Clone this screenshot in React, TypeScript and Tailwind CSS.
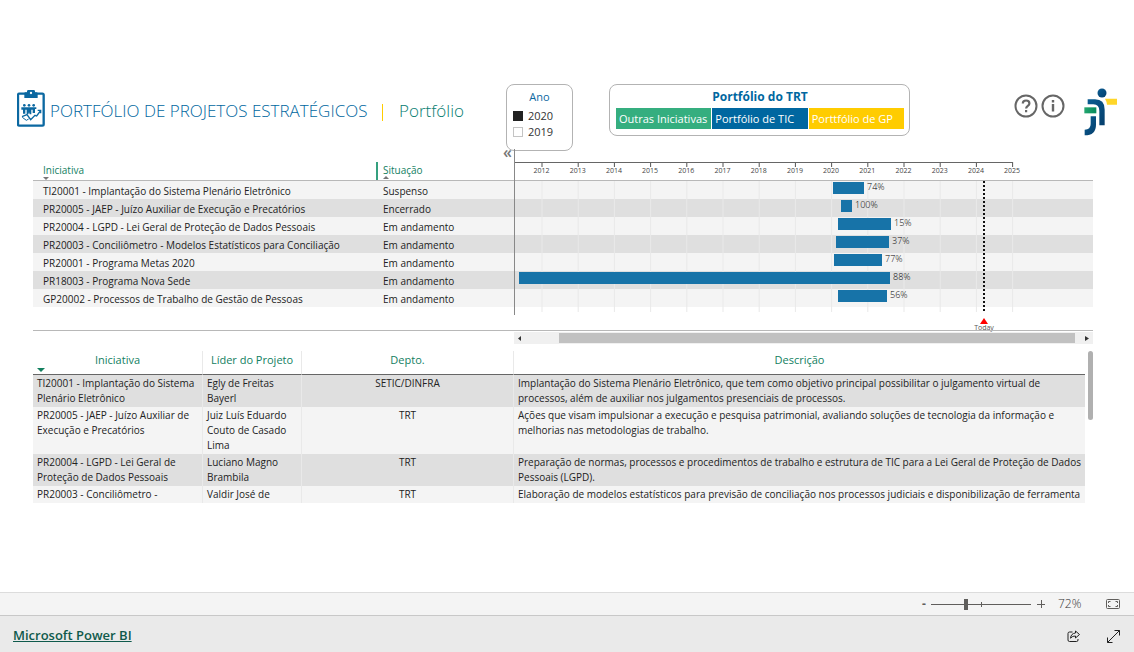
import { useState } from "react";

type Project = { name: string; status: string; start: number; end: number; pct: string };

const projects: Project[] = [
  { name: "TI20001 - Implantação do Sistema Plenário Eletrônico", status: "Suspenso", start: 319, end: 350, pct: "74%" },
  { name: "PR20005 - JAEP - Juízo Auxiliar de Execução e Precatórios", status: "Encerrado", start: 327, end: 338, pct: "100%" },
  { name: "PR20004 - LGPD - Lei Geral de Proteção de Dados Pessoais", status: "Em andamento", start: 324, end: 377, pct: "15%" },
  { name: "PR20003 - Conciliômetro - Modelos Estatísticos para Conciliação", status: "Em andamento", start: 322, end: 375, pct: "37%" },
  { name: "PR20001 - Programa Metas 2020", status: "Em andamento", start: 320, end: 368, pct: "77%" },
  { name: "PR18003 - Programa Nova Sede", status: "Em andamento", start: 5, end: 376, pct: "88%" },
  { name: "GP20002 - Processos de Trabalho de Gestão de Pessoas", status: "Em andamento", start: 324, end: 373, pct: "56%" },
];

const details = [
  ["TI20001 - Implantação do Sistema Plenário Eletrônico", "Egly de Freitas Bayerl", "SETIC/DINFRA", "Implantação do Sistema Plenário Eletrônico, que tem como objetivo principal possibilitar o julgamento virtual de processos, além de auxiliar nos julgamentos presenciais de processos."],
  ["PR20005 - JAEP - Juízo Auxiliar de Execução e Precatórios", "Juiz Luís Eduardo Couto de Casado Lima", "TRT", "Ações que visam impulsionar a execução e pesquisa patrimonial, avaliando soluções de tecnologia da informação e melhorias nas metodologias de trabalho."],
  ["PR20004 - LGPD - Lei Geral de Proteção de Dados Pessoais", "Luciano Magno Brambila", "TRT", "Preparação de normas, processos e procedimentos de trabalho e estrutura de TIC para a Lei Geral de Proteção de Dados Pessoais (LGPD)."],
  ["PR20003 - Conciliômetro -", "Valdir José de", "TRT", "Elaboração de modelos estatísticos para previsão de conciliação nos processos judiciais e disponibilização de ferramenta"],
];

const years = [2012, 2013, 2014, 2015, 2016, 2017, 2018, 2019, 2020, 2021, 2022, 2023, 2024, 2025];
const SPAN = 579;
const pos = (v: number) => `${(v / SPAN) * 100}%`;
const yearX = (y: number) => 27.5 + (y - 2012) * 36.2;

function ClipboardIcon() {
  return (
    <svg className="h-[37px] w-7 shrink-0" viewBox="51 45 84 111" aria-hidden="true">
      <rect x="54" y="56" width="77" height="96" rx="4" fill="#fff" stroke="#0b68a1" strokeWidth="7" />
      <path d="M73 69V55q0-3 3-3h5v-3q0-4 4-4h16q4 0 4 4v3h4q4 0 4 4v13z" fill="#0b68a1" />
      <circle cx="93" cy="54" r="3.5" fill="#fff" />
      <g fill="#0b68a1">
        <circle cx="73" cy="91" r="4" />
        <circle cx="87" cy="91" r="4" />
        <circle cx="101" cy="91" r="4" />
        <path d="M64 97h45v5h-4v12h-7v-10h-4v14h-5l-2-6-2 6h-5v-14h-4v12h-7v-12h-5z" />
      </g>
      <path d="M66 125l15-6 11 15 13-13 5 2 11-15M113 106h9v9" fill="none" stroke="#0b68a1" strokeWidth="4" />
      <path d="M67 127l12 9 7-4" fill="none" stroke="#0b68a1" strokeWidth="3" />
    </svg>
  );
}

function TrtLogo() {
  return (
    <svg className="h-12 w-[33px]" viewBox="252 38 99 144" aria-label="TRT" role="img">
      <defs>
        <linearGradient id="navy" x1="0" y1="0" x2="1" y2="1">
          <stop offset="0" stopColor="#0a5d93" />
          <stop offset="1" stopColor="#063f6c" />
        </linearGradient>
        <linearGradient id="green" x1="0" y1="0" x2="1" y2="0">
          <stop offset="0" stopColor="#23a66f" />
          <stop offset="1" stopColor="#078a5b" />
        </linearGradient>
      </defs>
      <circle cx="306" cy="53" r="13.5" fill="url(#navy)" />
      <path d="M315 70h36v18h-30q-1-10-6-18z" fill="#ffd629" />
      <path d="M263 72h22q29 0 29 31v47h-16v-43q0-20-18-20h-17z" fill="url(#navy)" />
      <path d="M253 96h36v18h-36z" fill="url(#green)" />
      <path d="M272 123h16v25q0 32-34 32v-17q18 0 18-17z" fill="url(#navy)" />
    </svg>
  );
}

function GanttChart() {
  return (
    <svg className="block h-[179px] w-full overflow-visible font-['Open_Sans',sans-serif]" role="img" aria-label="Cronograma">
      {projects.map((p, i) => (
        <rect key={p.name} x="0" y={30 + i * 18} width="100%" height="18" fill={i % 2 ? "#dfdfdf" : "#f4f4f4"} />
      ))}
      <rect x="0" y="29" width="100%" height="1" fill="#b8b8b8" />
      {years.map((y) => (
        <g key={y}>
          <rect x={pos(yearX(y))} y="30" width="1" height="131" fill="#e9e9e9" />
          <rect x={pos(yearX(y))} y="11" width="1" height="5" fill="#555" />
          <text x={pos(yearX(y))} y="22" textAnchor="middle" fontSize="7" fill="#444">{y}</text>
        </g>
      ))}
      <rect x="0" y="11" width={pos(498)} height="1" fill="#666" />
      <rect x="0" y="-2" width="1" height="166" fill="#888" />
      {projects.map((p, i) => (
        <g key={p.name}>
          <rect x={pos(p.start)} y={31 + i * 18} width={pos(p.end - p.start)} height="12" fill="#1773a8" />
          <text x={pos(p.end + 3)} y={39 + i * 18} fontSize="9" fontWeight="300" fill="#000">{p.pct}</text>
        </g>
      ))}
      <line x1={pos(470)} x2={pos(470)} y1="30" y2="161" stroke="#111" strokeWidth="2" strokeDasharray="2 2" />
      <svg x={pos(470)} y="167" width="8" height="6" overflow="visible">
        <path d="M-4 6L0 0l4 6z" fill="#f00" />
      </svg>
      <text x={pos(470)} y="179" textAnchor="middle" fontSize="7" fill="#555">Today</text>
    </svg>
  );
}

function YearOption({ year, initial }: { year: string; initial: boolean }) {
  const [on, setOn] = useState(initial);
  return (
    <label className="flex h-4 items-center gap-[5px] text-[11px] text-[#333]">
      <input
        type="checkbox"
        checked={on}
        onChange={() => setOn(!on)}
        className="size-[10px] appearance-none border border-[#c4c4c4] bg-white checked:border-[#222] checked:bg-[#222]"
      />
      {year}
    </label>
  );
}

export default function App() {
  const [zoom, setZoom] = useState(72);
  return (
    <div className="flex min-h-screen flex-col bg-white font-['Open_Sans','Noto_Sans',sans-serif] text-[#222]">
      <main className="grow pt-[84px]">
        <header className="flex h-[67px] items-start pr-[17px] pl-[17px]">
          <div className="flex w-[489px] shrink-0 items-start pt-[6px]">
            <ClipboardIcon />
            <h1 className="mt-[9px] ml-[5px] text-[17px] leading-6 font-light whitespace-nowrap text-[#0067a0]">PORTFÓLIO DE PROJETOS ESTRATÉGICOS</h1>
            <span className="mt-[14px] ml-auto h-[17px] w-px bg-[#fc0]" />
            <h2 className="mt-[9px] mr-[42px] ml-4 text-[17px] leading-6 font-light text-[#067d70]">Portfólio</h2>
          </div>
          <fieldset className="h-[67px] w-[67px] shrink-0 rounded-lg border border-[#b3b3b3] px-[6px] pt-1">
            <div className="text-center text-[11px] leading-4 text-[#0b68a1]">Ano</div>
            <div className="mt-[3px]">
              <YearOption year="2020" initial={true} />
              <YearOption year="2019" initial={false} />
            </div>
          </fieldset>
          <nav className="ml-9 h-[52px] w-[301px] shrink-0 rounded-lg border border-[#b3b3b3] pt-1 pr-[5px] pl-[6px]">
            <div className="text-center text-xs leading-4 font-bold text-[#0067a0]">Portfólio do TRT</div>
            <div className="mt-[3px] grid grid-cols-3 gap-px text-left text-[11px] leading-[21px] text-white">
              <button className="bg-[#35ae7f] pl-[3px] text-left whitespace-nowrap">Outras Iniciativas</button>
              <button className="bg-[#0067a0] pl-[3px] text-left whitespace-nowrap">Portfólio de TIC</button>
              <button className="bg-[#fc0] pl-[3px] text-left whitespace-nowrap">Porttfólio de GP</button>
            </div>
          </nav>
          <div className="ml-auto flex gap-[3px] pt-[10px]">
            <button aria-label="Ajuda">
              <svg className="size-6" viewBox="0 0 24 24" fill="none" stroke="#666" strokeWidth="2">
                <circle cx="12" cy="12" r="10.5" />
                <path d="M8.8 9.6q0-3.1 3.3-3.1t3.3 2.9c0 2.4-3.3 2.5-3.3 5.1M12.1 16v2.2" strokeWidth="2.2" />
              </svg>
            </button>
            <button aria-label="Informações">
              <svg className="size-6" viewBox="0 0 24 24" fill="none" stroke="#666" strokeWidth="2">
                <circle cx="12" cy="12" r="10.5" />
                <path d="M12 6v2.4M12 10v7.6" strokeWidth="2.4" />
              </svg>
            </button>
          </div>
          <div className="ml-[19px] pt-1">
            <TrtLogo />
          </div>
        </header>

        <section className="relative mr-[41px] ml-[33px] grid grid-cols-[481px_1fr]">
          <button aria-label="Recolher" className="absolute top-[-7px] left-[470px] text-base leading-4 font-semibold text-[#777]">«</button>
          <table className="w-full table-fixed border-separate border-spacing-0 self-start text-[10px]">
            <thead>
              <tr className="h-[30px] text-left text-[#12805f]">
                <th className="w-[345px] border-b border-[#b8b8b8] p-0 pt-[11px] pl-[10px] align-top font-normal">
                  <div className="relative h-[18px] border-r-2 border-[#35a07f] leading-[16px]">
                    Iniciativa
                    <span className="absolute bottom-0 left-0 border-x-[3px] border-t-[3px] border-x-transparent border-t-[#777]" />
                  </div>
                </th>
                <th className="border-b border-[#b8b8b8] p-0 pt-[11px] pl-[5px] align-top font-normal">
                  <div className="relative h-[18px] leading-[16px]">
                    Situação
                    <span className="absolute bottom-[1px] left-0 border-x-[3px] border-b-[3px] border-x-transparent border-b-[#777]" />
                  </div>
                </th>
              </tr>
            </thead>
            <tbody>
              {projects.map((p) => (
                <tr key={p.name} className="h-[18px] leading-4 odd:bg-[#f4f4f4] even:bg-[#dfdfdf]">
                  <td className="p-0 pt-[2px] pl-[10px] whitespace-nowrap">{p.name}</td>
                  <td className="p-0 pt-[2px] pl-[5px]">{p.status}</td>
                </tr>
              ))}
            </tbody>
          </table>
          <GanttChart />
          <div className="col-span-2 border-t border-[#b8b8b8]" />
          <div className="col-start-2 mt-px flex h-3 items-center bg-[#f0f0f0]">
            <button aria-label="Rolar para a esquerda" className="flex w-[45px] pl-1">
              <svg className="h-[5px] w-1" viewBox="0 0 4 5"><path d="M3 0v5L0 2.500z" fill="#333" /></svg>
            </button>
            <div className="h-[10px] grow bg-[#c1c1c1]" />
            <button aria-label="Rolar para a direita" className="flex w-[18px] pl-[10px]">
              <svg className="h-[5px] w-1" viewBox="0 0 4 5"><path d="M0 0v5l4-2.500z" fill="#333" /></svg>
            </button>
          </div>
        </section>

        <section className="mt-[7px] mr-[41px] ml-[33px] flex h-[153px] gap-[3px] overflow-hidden">
          <table className="grow table-fixed border-separate border-spacing-0 self-start text-[10px] leading-[15px]">
            <thead>
              <tr className="h-6 align-top text-[11px] leading-[18px] text-[#12805f]">
                <th className="relative w-[170px] border-r border-b border-r-[#e9e9e9] border-b-[#666] p-0 font-normal">
                  Iniciativa
                  <span className="absolute bottom-[2px] left-1 border-x-4 border-t-4 border-x-transparent border-t-[#12805f]" />
                </th>
                <th className="w-[99px] border-r border-b border-r-[#e9e9e9] border-b-[#666] p-0 font-normal">Líder do Projeto</th>
                <th className="w-[212px] border-r border-b border-r-[#e9e9e9] border-b-[#666] p-0 font-normal">Depto.</th>
                <th className="border-b border-[#666] p-0 font-normal">Descrição</th>
              </tr>
            </thead>
            <tbody>
              {details.map((d) => (
                <tr key={d[0]} className="align-top odd:bg-[#dfdfdf] even:bg-[#f4f4f4]">
                  <td className="border-r border-[#e9e9e9] px-1 pt-px pb-px">{d[0]}</td>
                  <td className="border-r border-[#e9e9e9] px-1 pt-px pb-px">{d[1]}</td>
                  <td className="border-r border-[#e9e9e9] px-1 pt-px pb-px text-center">{d[2]}</td>
                  <td className="px-1 pt-px pb-px">{d[3]}</td>
                </tr>
              ))}
            </tbody>
          </table>
          <div className="h-[69px] w-[5px] shrink-0 rounded-full bg-[#b0b0b0]" />
        </section>
      </main>

      <div className="flex h-[23px] items-center justify-end border-t border-[#dcdcdc] bg-[#f4f4f4] pr-[14px] text-xs text-[#605e5c]">
        <button aria-label="Reduzir" className="w-[10px] text-center font-bold">-</button>
        <div className="relative mx-[2px] flex h-4 w-[100px] items-center">
          <span className="absolute left-[50px] h-[5px] w-px bg-[#605e5c]" />
          <input
            type="range"
            aria-label="Zoom"
            min={10}
            max={190}
            value={zoom}
            onChange={(e) => setZoom(Number(e.target.value))}
            className="h-px w-full appearance-none bg-[#605e5c] [&::-webkit-slider-thumb]:h-[11px] [&::-webkit-slider-thumb]:w-1 [&::-webkit-slider-thumb]:appearance-none [&::-webkit-slider-thumb]:bg-[#605e5c]"
          />
        </div>
        <button aria-label="Ampliar" className="ml-1">
          <svg className="size-2" viewBox="0 0 8 8" stroke="#605e5c" fill="none"><path d="M0 4.500h8M4.500 0v8" /></svg>
        </button>
        <span className="ml-[13px] w-12 font-light text-[#333]">{zoom}%</span>
        <button aria-label="Ajustar à página">
          <svg className="h-[10px] w-[14px]" viewBox="0 0 14 10" fill="none" stroke="#605e5c">
            <rect x="0.5" y="0.5" width="13" height="9" rx="1" />
            <path d="M4.500 2.500h-2v1.500M2.500 6v1.500h2M9.500 2.500h2v1.500M11.500 6v1.500h-2" />
          </svg>
        </button>
      </div>
      <footer className="flex h-[37px] items-center border-t border-[#c8c8c8] bg-[#eaeaea] pt-1 pr-[14px] pl-[13px]">
        <a href="#" className="text-[13px] font-semibold text-[#0f5a4c] underline">Microsoft Power BI</a>
        <button aria-label="Compartilhar" className="ml-auto">
          <svg className="h-3 w-[14px]" viewBox="0 0 14 12" fill="none" stroke="#222">
            <path d="M5.500 2H2.500q-1.500 0-1.500 1.500v6.500q0 1.500 1.500 1.500h7q1.500 0 1.500-1.500V9" />
            <path d="M8.500 1l4 3.500-4 3.500V6q-3-.3-5 2.200Q4 3.400 8.500 3z" />
          </svg>
        </button>
        <button aria-label="Tela inteira" className="ml-[26px]">
          <svg className="size-[13px]" viewBox="0 0 13 13" fill="none" stroke="#222">
            <path d="M.5 12.500l12-12M7.500.5h5v5M.5 7.500v5h5" />
          </svg>
        </button>
      </footer>
    </div>
  );
}
